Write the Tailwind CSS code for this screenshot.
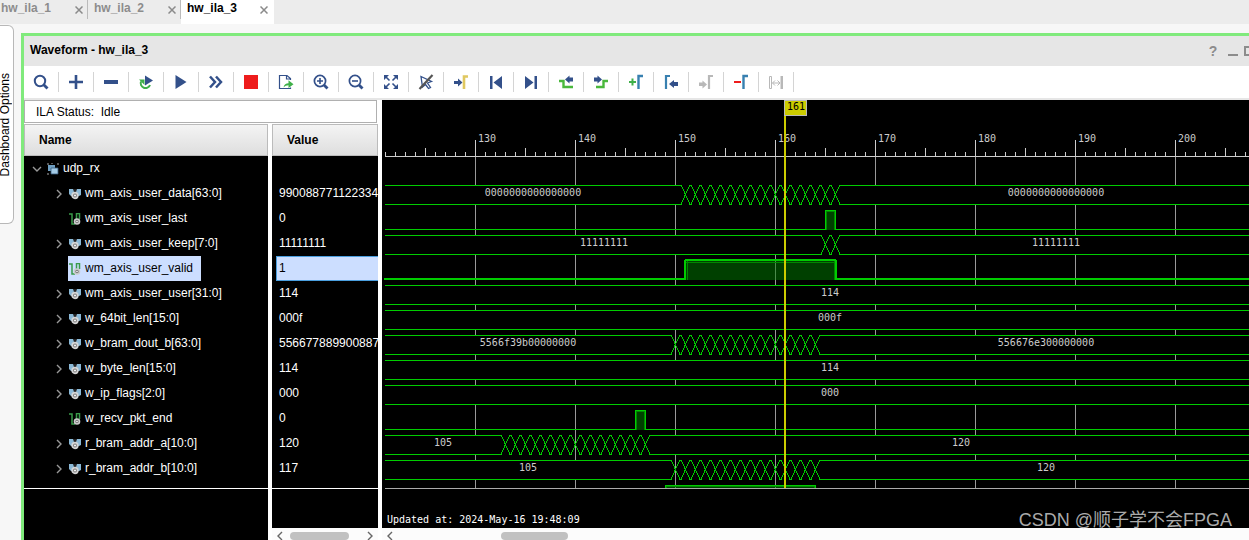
<!DOCTYPE html>
<html lang="en">
<head>
<meta charset="utf-8">
<title>Waveform - hw_ila_3</title>
<script src="https://cdn.jsdelivr.net/npm/@tailwindcss/browser@4"></script>
</head>
<body class="h-screen overflow-hidden bg-[#f7f7f7] font-['Liberation_Sans',Arial,sans-serif] text-xs text-black">
<svg class="hidden" aria-hidden="true">
  <symbol id="close" viewBox="0 0 8 8"><path d="M.5 .5 7.5 7.5M7.5 .5 .5 7.5" fill="none" stroke="#8a8a8a" stroke-width="1.5"/></symbol>
  <symbol id="search" viewBox="0 0 20 20"><circle cx="9" cy="9" r="5.2" fill="none" stroke="#33508a" stroke-width="2"/><path d="M12.5 12.5 16.5 16.5" stroke="#33508a" stroke-width="2.8"/></symbol>
  <symbol id="plus" viewBox="0 0 20 20"><path d="M3 10H17M10 3V17" stroke="#33508a" stroke-width="2.6"/></symbol>
  <symbol id="minus" viewBox="0 0 20 20"><path d="M3 10H17" stroke="#33508a" stroke-width="4"/></symbol>
  <symbol id="restart" viewBox="0 0 20 20"><path d="M5 9.5A4.8 4.8 0 1 0 14 13" fill="none" stroke="#3fb049" stroke-width="2"/><path d="M3 7.5H8.5V13Z" fill="#3fb049"/><path d="M9 3.5 17 8.5 9 13.5Z" fill="#33508a"/></symbol>
  <symbol id="play" viewBox="0 0 20 20"><path d="M4.5 3 15.500 10 4.5 17Z" fill="#33508a"/></symbol>
  <symbol id="fast" viewBox="0 0 20 20"><path d="M4 4.5 9 10 4 15.5M10 4.5 15 10 10 15.5" fill="none" stroke="#33508a" stroke-width="2.5"/></symbol>
  <symbol id="stop" viewBox="0 0 20 20"><path d="M3 3H17V17H3Z" fill="#ee1c1c"/></symbol>
  <symbol id="export" viewBox="0 0 20 20"><path d="M14.5 8V6.5L11 3.5H3.5V16.5H14.5V15.5M10.5 3.5V7H14.5" fill="none" stroke="#33508a" stroke-width="1.2"/><path d="M7.5 15.5C8 12.5 10 11.2 12.5 11.2V8.2L17.5 12.2 12.5 16V13.3C10.5 13.3 9 14 7.5 15.5Z" fill="#3fb049"/></symbol>
  <symbol id="zin" viewBox="0 0 20 20"><circle cx="9" cy="9" r="5.6" fill="none" stroke="#33508a" stroke-width="1.7"/><path d="M13 13 16.5 16.5" stroke="#33508a" stroke-width="2.8"/><path d="M6 9H12M9 6V12" stroke="#33508a" stroke-width="1.6"/></symbol>
  <symbol id="zout" viewBox="0 0 20 20"><circle cx="9" cy="9" r="5.6" fill="none" stroke="#33508a" stroke-width="1.7"/><path d="M13 13 16.5 16.5" stroke="#33508a" stroke-width="2.8"/><path d="M6 9H12" stroke="#33508a" stroke-width="1.6"/></symbol>
  <symbol id="fit" viewBox="0 0 20 20"><path d="M3 3H8L3 8ZM17 3V8L12 3ZM3 17V12L8 17ZM17 17H12L17 12Z" fill="#33508a"/><path d="M4 4 8.5 8.5M16 4 11.5 8.5M4 16 8.5 11.5M16 16 11.5 11.5" stroke="#33508a" stroke-width="1.6"/></symbol>
  <symbol id="nocursor" viewBox="0 0 20 20"><path d="M5 4.5 15.5 9.5 11.5 11 14.5 15.5 12.5 16.5 9.5 12.5 6.5 15Z" fill="none" stroke="#33508a" stroke-width="1.3"/><path d="M16.5 3 3.5 17" stroke="#555" stroke-width="2.2"/></symbol>
  <symbol id="goto" viewBox="0 0 20 20"><path d="M3 9H7V6.5L11.5 10.5 7 14.5V12H3Z" fill="#33508a"/><path d="M13 17V4.5H17" fill="none" stroke="#e0c860" stroke-width="2.6"/></symbol>
  <symbol id="first" viewBox="0 0 20 20"><path d="M4 4H6.500V17H4ZM16 4V17L7.500 10.500Z" fill="#33508a"/></symbol>
  <symbol id="last" viewBox="0 0 20 20"><path d="M16 4H13.500V17H16ZM4 4V17L12.500 10.500Z" fill="#33508a"/></symbol>
  <symbol id="ptrans" viewBox="0 0 20 20"><path d="M3 9H7.500V15H17" fill="none" stroke="#4ab83c" stroke-width="2.4"/><path d="M17 5.500H13.500V3.500L9 7.500 13.500 11.500V9.500H17Z" fill="#33508a"/></symbol>
  <symbol id="ntrans" viewBox="0 0 20 20"><path d="M17 9H12.500V15H5" fill="none" stroke="#4ab83c" stroke-width="2.4"/><path d="M3 5.500H6.500V3.500L11 7.500 6.500 11.500V9.500H3Z" fill="#33508a"/></symbol>
  <symbol id="addm" viewBox="0 0 20 20"><path d="M3 10H10M6.500 6.500V13.500" stroke="#3fb049" stroke-width="2"/><path d="M12.500 17V4H17" fill="none" stroke="#3880b0" stroke-width="2.4"/></symbol>
  <symbol id="prevm" viewBox="0 0 20 20"><path d="M5 17V4H9" fill="none" stroke="#3880b0" stroke-width="2.2"/><path d="M17 10H13V8L8 12 13 16V14H17Z" fill="#33508a"/></symbol>
  <symbol id="nextm" viewBox="0 0 20 20"><path d="M13 17V4H17" fill="none" stroke="#b8b8b8" stroke-width="2.2"/><path d="M3 10.500H6.500V8.500L11 12.500 6.500 16.500V14H3Z" fill="#b8b8b8"/></symbol>
  <symbol id="delm" viewBox="0 0 20 20"><path d="M3 10H10" stroke="#ee1c1c" stroke-width="2"/><path d="M12.500 17V4H17" fill="none" stroke="#3880b0" stroke-width="2.4"/></symbol>
  <symbol id="swap" viewBox="0 0 20 20"><path d="M3.500 4.500H5.500V16.500H3.500Z" fill="none" stroke="#b8b8b8"/><path d="M14.500 4H17V17H14.500Z" fill="#b8b8b8"/><path d="M6.500 11H14M9 8.500 6.500 11 9 13.500M11.500 8.500 14 11 11.500 13.500" fill="none" stroke="#b8b8b8"/></symbol>
  <symbol id="right" viewBox="0 0 8 10"><path d="M2 1 6 5 2 9" fill="none" stroke="currentColor" stroke-width="1.4"/></symbol>
  <symbol id="down" viewBox="0 0 10 8"><path d="M1 2 5 6 9 2" fill="none" stroke="currentColor" stroke-width="1.4"/></symbol>
  <symbol id="group" viewBox="0 0 12 12"><path d="M0 0H2V2H0ZM10 0H12V2H10ZM0 10H2V12H0ZM4 0H6V1H4Z" fill="#555"/><path d="M1 2H8V8H1Z" fill="#6f9fc2"/><path d="M4 5H11V11H4Z" fill="#a4cbe6" stroke="#355c7c" stroke-width=".8"/></symbol>
  <symbol id="bus" viewBox="0 0 12 12"><path d="M0 1H5L6 3 7 1H12V7L10 8H2L0 6Z" fill="#8ab8d6"/><path d="M4 1H8L7 4H5Z" fill="#222"/><circle cx="6" cy="7.500" r="2.800" fill="#777" stroke="#d4d4d4" stroke-width="1.800"/><circle cx="6" cy="7.500" r="1" fill="#fff"/></symbol>
  <symbol id="sig" viewBox="0 0 12 12"><path d="M0 1H3V11H6M7.500 6V.5H10.500V6" fill="none" stroke="#3a9a4a" stroke-width="1.500"/><circle cx="8" cy="8.500" r="2.500" fill="#777" stroke="#ccc" stroke-width="1.600"/><circle cx="8" cy="8.500" r=".8" fill="#fff"/></symbol>
</svg>

<div class="relative flex h-full flex-col">
  <nav class="flex h-6 shrink-0 bg-[#ececec] font-bold text-[#8c8c8c]" aria-label="Dashboards">
    <div class="flex h-[19px] w-22 items-center justify-between border-r border-[#bbb] pr-1 pl-px"><button class="-mt-1 leading-4">hw_ila_1</button><button aria-label="Close hw_ila_1"><svg class="size-2"><use href="#close"/></svg></button></div>
    <div class="flex h-[19px] w-[93px] items-center justify-between border-r border-[#bbb] pr-1 pl-1.5"><button class="-mt-1 leading-4">hw_ila_2</button><button aria-label="Close hw_ila_2"><svg class="size-2"><use href="#close"/></svg></button></div>
    <div class="flex h-6 w-[93px] items-center justify-between bg-white pr-1.5 pb-[5px] pl-1.5 text-black"><button class="-mt-1 leading-4">hw_ila_3</button><button aria-label="Close hw_ila_3"><svg class="size-2"><use href="#close"/></svg></button></div>
  </nav>

  <div class="flex min-h-0 flex-1">
    <div class="w-[21px] shrink-0 pt-px">
      <button class="flex h-[199px] w-3.5 items-center justify-center rounded-r-md border border-l-0 border-[#b8b8b8] bg-white pr-[3px]"><span class="rotate-180 leading-[10px] whitespace-nowrap [writing-mode:vertical-rl]">Dashboard Options</span></button>
    </div>

    <main class="mt-[9px] flex min-w-0 flex-1 flex-col border-t-3 border-l-3 border-[#80ea7c] bg-white">
      <header class="flex h-[30px] shrink-0 items-center bg-[#e6e6e6] pl-1.5 font-bold">
        <h1 class="-mt-0.5 flex-1">Waveform - hw_ila_3</h1>
        <div class="flex shrink-0 items-center text-[#8c8c8c]">
          <button class="w-5 text-sm leading-4" aria-label="Help">?</button>
          <button class="flex h-4 w-5 items-end justify-center pb-[3px]" aria-label="Minimize"><span class="h-0.5 w-2.5 bg-[#8c8c8c]"></span></button>
          <button class="w-1.5 overflow-hidden pl-px" aria-label="Maximize"><span class="block h-2.5 w-2.5 border-2 border-[#8c8c8c]"></span></button>
        </div>
      </header>

      <div role="toolbar" id="tools" aria-label="Waveform tools" class="flex h-[34px] shrink-0 items-center border-b-2 border-[#e6e6e6]"></div>

      <div class="flex min-h-0 flex-1">
        <div class="flex w-[358px] shrink-0 flex-col pr-1">
          <div class="mr-px h-[23px] shrink-0 border border-[#b0b0b0] pl-[11px] leading-[22px] whitespace-pre">ILA Status:  Idle</div>
          <div class="mt-px flex min-h-0 flex-1 gap-1">
            <section class="flex w-61 flex-col bg-black">
              <h2 class="h-8 shrink-0 border border-[#bbb] bg-linear-to-b from-[#f4f4f4] to-[#dedede] pl-3.5 leading-[30px] font-bold">Name</h2>
              <ul id="names" role="tree" aria-label="Signals" class="h-[333px] shrink-0 overflow-hidden border-b border-white leading-[25px] text-white"></ul>
            </section>
            <section class="flex w-[106px] flex-col bg-black">
              <h2 class="h-8 shrink-0 border border-[#bbb] bg-linear-to-b from-[#f4f4f4] to-[#dedede] pl-3.5 leading-[30px] font-bold">Value</h2>
              <ul id="values" aria-label="Values" class="h-[333px] shrink-0 overflow-hidden border-b border-white pt-[25px] text-white"></ul>
              <div class="flex-1"></div>
              <div class="flex h-3 shrink-0 items-center justify-between bg-[#fcfcfc] px-1 pt-[3px] text-[#666]">
                <button aria-label="Scroll left"><svg class="h-2.5 w-2 rotate-180"><use href="#right"/></svg></button>
                <span class="mr-4 ml-1 h-2 w-[59px] rounded-full bg-[#c1c1c1]"></span>
                <button aria-label="Scroll right"><svg class="h-2.5 w-2"><use href="#right"/></svg></button>
              </div>
            </section>
          </div>
        </div>

        <section class="flex min-w-0 flex-1 flex-col bg-black" aria-label="Waveform">
          <svg id="wave" class="min-h-0 w-full flex-1 overflow-hidden font-['DejaVu_Sans_Mono',monospace] text-[10px]" role="img" aria-label="Signal traces"></svg>
          <div class="flex h-3 shrink-0 items-center bg-[#fcfcfc] px-1 pt-[3px] text-[#666]">
            <button aria-label="Scroll left"><svg class="h-2.5 w-2 rotate-180"><use href="#right"/></svg></button>
            <span class="ml-[107px] h-2 w-[67px] rounded-full bg-[#c1c1c1]"></span>
          </div>
        </section>
      </div>
    </main>
  </div>
  <div class="absolute right-[17px] bottom-1 font-['Liberation_Sans','Noto_Sans_CJK_SC',sans-serif] text-lg leading-8 text-[#aaa]">CSDN @顺子学不会FPGA</div>
</div>

<script>
const tools = [['search','Search'],['plus','Zoom step in'],['minus','Zoom step out'],['restart','Auto re-trigger'],['play','Run trigger'],['fast','Run immediate'],['stop','Stop trigger'],['export','Export data'],['zin','Zoom in'],['zout','Zoom out'],['fit','Zoom fit'],['nocursor','Cursor mode'],['goto','Go to cursor'],['first','Go to start'],['last','Go to end'],['ptrans','Previous transition'],['ntrans','Next transition'],['addm','Add marker'],['prevm','Previous marker'],['nextm','Next marker'],['delm','Remove marker'],['swap','Swap cursors']];
document.getElementById('tools').innerHTML = tools.map(([id, label]) =>
  `<button class="flex h-5 w-[35px] shrink-0 items-center justify-center border-r border-[#d4d4d4]" aria-label="${label}"><svg class="size-5"><use href="#${id}"/></svg></button>`).join('');

// name, value, kind, stable labels [x, text], first and last change (x)
const signals = [
  {n:'wm_axis_user_data[63:0]', v:'9900887711223344', bus:1, t:[[151,'0000000000000000'],[674,'0000000000000000']], x:[303,453]},
  {n:'wm_axis_user_last', v:'0', p:[443,453]},
  {n:'wm_axis_user_keep[7:0]', v:'11111111', bus:1, t:[[222,'11111111'],[674,'11111111']], x:[443,453]},
  {n:'wm_axis_user_valid', v:'1', p:[303,453], sel:1},
  {n:'wm_axis_user_user[31:0]', v:'114', bus:1, t:[[448,'114']]},
  {n:'w_64bit_len[15:0]', v:'000f', bus:1, t:[[448,'000f']]},
  {n:'w_bram_dout_b[63:0]', v:'5566778899008877', bus:1, t:[[146,'5566f39b00000000'],[664,'556676e300000000']], x:[293,433]},
  {n:'w_byte_len[15:0]', v:'114', bus:1, t:[[448,'114']]},
  {n:'w_ip_flags[2:0]', v:'000', bus:1, t:[[448,'000']]},
  {n:'w_recv_pkt_end', v:'0', p:[253,263]},
  {n:'r_bram_addr_a[10:0]', v:'120', bus:1, t:[[61,'105'],[579,'120']], x:[123,263]},
  {n:'r_bram_addr_b[10:0]', v:'117', bus:1, t:[[146,'105'],[664,'120']], x:[293,433]},
  {n:'', v:'', p:[283,433]},
];
document.getElementById('names').innerHTML =
  `<li role="treeitem" class="flex h-[25px] items-center pl-2"><button class="text-[#999]" aria-label="Collapse udp_rx"><svg class="h-2 w-2.5"><use href="#down"/></svg></button><svg class="ml-[5px] size-3"><use href="#group"/></svg><span class="ml-1">udp_rx</span></li>` +
  signals.map(s => `<li role="treeitem" class="flex h-[25px] items-center pl-[31px]"><button class="${s.bus ? 'w-2 text-[#999]' : 'invisible w-2'}" aria-label="Expand"><svg class="h-2.5 w-2"><use href="#right"/></svg></button><span class="${s.sel ? 'ml-[5px] flex h-full items-center bg-[#ccdeff] pr-2 pl-px text-black' : 'ml-[5px] flex h-full items-center pl-px'}"><svg class="size-3"><use href="#${s.bus ? 'bus' : 'sig'}"/></svg><span class="ml-1">${s.n}</span></span></li>`).join('');
document.getElementById('values').innerHTML = signals.map(s =>
  `<li class="${s.sel ? 'ml-1 h-[25px] overflow-hidden border border-r-0 border-[#4a9ede] bg-[#ccdeff] pl-0.5 leading-[23px] text-black' : 'h-[25px] overflow-hidden pl-[7px] leading-[25px]'}">${s.v}</li>`).join('');

// Waveform drawing: ten units per sample, sample 130 at x = 93
const W = 3000, G = '#00cc00';
let o = '';
const rect = (x, y, w, h, f) => { o += `<rect x="${x}" y="${y}" width="${w}" height="${h}" fill="${f}"/>`; };
const text = (x, y, s, f, a) => { o += `<text x="${x}" y="${y}" fill="${f}" text-anchor="${a}">${s}</text>`; };
rect(3, 56, W, 1, '#ccc');
for (let i = 0; i < 280; i++) {
  const x = 3 + i * 10, major = i % 10 === 9, mid = i % 10 === 4;
  rect(x, major ? 40 : mid ? 48 : 52, 1, major ? 16 : mid ? 8 : 4, '#ccc');
  if (major) { rect(x, 57, 1, 331, '#999'); text(x + 3, 42, 121 + i, '#ccc', 'start'); }
}
signals.forEach((s, i) => {
  const y = 85 + i * 25, b = y + 19;
  if (s.bus) {
    const [a, z] = s.x || [W, W];
    rect(3, y, a - 7, 20, '#000'); rect(3, y, a - 7, 1, G); rect(3, b, a - 7, 1, G);
    if (s.x) {
      rect(z + 5, y, W, 20, '#000'); rect(z + 5, y, W, 1, G); rect(z + 5, b, W, 1, G);
      let d = '';
      for (let c = a; c <= z; c += 10) d += `M${c-4} ${y+.5}L${c-2} ${y+4}L${c+3} ${y+15}L${c+5} ${b+.5}M${c-4} ${b+.5}L${c-2} ${y+15}L${c+3} ${y+4}L${c+5} ${y+.5}`;
      for (let c = a; c < z; c += 10) d += `M${c+4} ${y+.5}H${c+7}M${c+4} ${b+.5}H${c+7}`;
      o += `<path d="${d}" fill="none" stroke="${G}" shape-rendering="crispEdges"/>`;
    }
    s.t.forEach(([x, l]) => text(x, y + 11, l, '#ccc', 'middle'));
  } else {
    const [a, z] = s.p, k = s.sel ? 2 : 1, h = i === 12 ? 3 : 20, l = s.sel ? 2 : 3;
    if (i !== 12) { rect(l, b + 1 - k, a - l, k, G); rect(z, b + 1 - k, W, k, G); }
    rect(a, y, z - a, h, 'rgba(0,128,0,.5)');
    rect(a, y + k, z - a, 1, '#008800'); rect(a + k, y, 1, h, '#008800'); rect(z - 1, y, 1, h, '#008800');
    rect(a, s.sel ? y - 1 : y, z - a + 1, k, G); rect(a - k + 1, y, k, h, G); rect(z, y, k, h, G);
  }
});
rect(3, 388, W, 1, '#aaa');
rect(402, 15, 2, 373, '#cccc00');
rect(402, 0, 23, 16, '#bbb'); rect(403, 1, 21, 14, '#cccc00');
text(405, 10, '161', '#000', 'start');
text(5, 423, 'Updated at: 2024-May-16 19:48:09', '#fff', 'start');
document.getElementById('wave').innerHTML = o;
</script>
</body>
</html>
